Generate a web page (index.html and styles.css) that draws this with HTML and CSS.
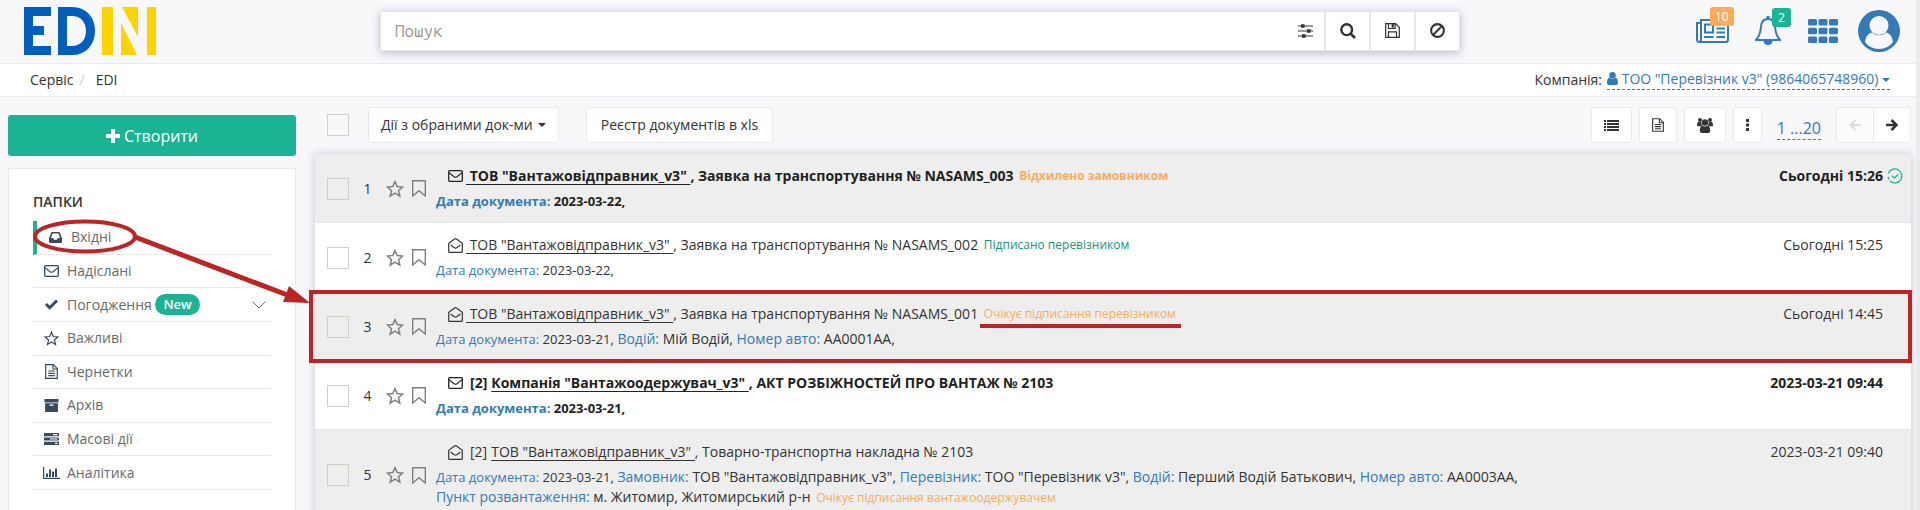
FILE: index.html
```html
<!DOCTYPE html>
<html lang="uk">
<head>
<meta charset="utf-8">
<title>EDIN</title>
<link rel="stylesheet" href="styles.css">
</head>
<body>
<svg class="sprite" aria-hidden="true">
  <symbol id="i-star" viewBox="0 0 18 18"><path d="M9 1.600l2.200 5 5.400.5-4.100 3.600 1.300 5.400L9 13.200l-4.800 2.900 1.300-5.400L1.400 7.100l5.400-.5z" fill="none" stroke="currentColor" stroke-width="1.500"/></symbol>
  <symbol id="i-bookmark" viewBox="0 0 14 17"><path d="M.7.7h12.600v15.300L7 10.600.7 16z" fill="none" stroke="currentColor" stroke-width="1.400"/></symbol>
  <symbol id="i-mail" viewBox="0 0 15 12"><rect x=".7" y=".7" width="13.600" height="10.600" rx="1" fill="none" stroke="currentColor" stroke-width="1.300"/><path d="M1 2.600l5 4.200q1.500.9 3 0l5-4.200" fill="none" stroke="currentColor" stroke-width="1.200"/></symbol>
  <symbol id="i-mail-open" viewBox="0 0 15 15"><path d="M.7 5.400Q4 2.600 6.500 1q1-.6 2 0 2.500 1.600 5.800 4.400v8q0 .9-.9.9H1.600q-.9 0-.9-.9zM2.600 7l3.600 2.800q1.300.8 2.600 0L12.400 7" fill="none" stroke="currentColor" stroke-width="1.200"/></symbol>
  <symbol id="i-file" viewBox="0 0 13 15"><path d="M.7.7h7.600l4 4v9.600H.7zM8 .7v4.300h4.300M3.200 7h6.600M3.200 9.300h6.600M3.200 11.600h6.600" fill="none" stroke="currentColor" stroke-width="1.200"/></symbol>
  <symbol id="i-user" viewBox="0 0 12 14"><circle cx="6" cy="3.500" r="3.500"/><path d="M2.600 6Q6 8.800 9.400 6 12 7 12 11.500q0 2.500-2 2.500H2q-2 0-2-2.500Q0 7 2.600 6z"/></symbol>
</svg>
<div class="app">
  <header class="top">
    <a class="logo" href="#" aria-label="EDIN">
      <svg viewBox="0 0 132 48" width="132" height="48">
        <g fill="#005fbb"><rect width="9" height="48"/><rect width="27" height="9"/><rect y="19" width="20" height="9"/><rect y="39" width="27" height="9"/></g>
        <path d="M38.500 4.500H48c11.500 0 18.500 8.500 18.500 19.500S59.500 43.500 48 43.500h-9.500z" fill="none" stroke="#005fbb" stroke-width="9"/>
        <g fill="#ffd200"><rect x="78" width="11" height="48"/><path d="M98 0h16v30zM97 16l16 32H97z"/><rect x="123" width="9" height="48"/></g>
      </svg>
    </a>
    <form class="search">
      <input type="text" placeholder="Пошук" aria-label="Пошук">
      <button type="button" class="filter" aria-label="Фільтр"><svg width="15" height="14" viewBox="0 0 15 14"><path d="M0 2h15M0 7h15M0 12h15" stroke="currentColor" stroke-width="1.200"/><path d="M3 .2h3.600v3.600H3zM9 5.200h3.600v3.600H9zM4 10.200h3.600v3.600H4z"/></svg></button>
      <button type="button" aria-label="Шукати"><svg width="16" height="16" viewBox="0 0 16 16"><circle cx="6.700" cy="6.700" r="5.400" fill="none" stroke="currentColor" stroke-width="2.400"/><path d="M10.500 10.500l4.500 4.500" stroke="currentColor" stroke-width="2.600"/></svg></button>
      <button type="button" aria-label="Зберегти"><svg width="15" height="15" viewBox="0 0 15 15"><path d="M.7.7h10l3.600 3.600v10H.7zM3.500 14.300V8.800h8v5.500M3.500.7v4.800h6.600V.7" fill="none" stroke="currentColor" stroke-width="1.200"/><path d="M6.600 1h2.200v3.600H6.600z"/></svg></button>
      <button type="button" aria-label="Скинути"><svg width="15" height="15" viewBox="0 0 15 15"><circle cx="7.500" cy="7.500" r="6.400" fill="none" stroke="currentColor" stroke-width="2.100"/><path d="M3 12l9-9" stroke="currentColor" stroke-width="2"/></svg></button>
    </form>
    <nav class="tools">
      <a class="tool" href="#" aria-label="Новини"><svg width="33" height="24" viewBox="0 0 33 24" fill="none" stroke="currentColor" stroke-width="2"><path d="M5 5V1h27v19.500q0 2.500-2.500 2.500H3.500Q1 23 1 20.500V4h4v16q0 3-2 3"/><path d="M9 5.500h8v8H9zM20.500 5.500h8.500M20.500 9.500h8.500M20.500 13.500h8.500M8 18h9.500M20.500 18h8.500"/></svg><span class="badge orange">10</span></a>
      <a class="tool bell" href="#" aria-label="Сповіщення"><svg width="26" height="29" viewBox="0 0 26 29"><path d="M13 3q6.500 0 7 7.500Q20.500 19 25 24H1q4.500-5 5-13.500Q6.500 3 13 3z" fill="none" stroke="currentColor" stroke-width="2"/><path d="M11.500 0h3v3h-3zM8.500 25h9q-.5 4-4.500 4t-4.500-4z"/></svg><span class="badge green">2</span></a>
      <a class="tool" href="#" aria-label="Додатки"><svg width="30" height="24" viewBox="0 0 30 24"><g id="apps-row"><rect width="9" height="6.500" rx="1.500"/><rect x="10.500" width="9" height="6.500" rx="1.500"/><rect x="21" width="9" height="6.500" rx="1.500"/></g><use href="#apps-row" y="8.700"/><use href="#apps-row" y="17.400"/></svg></a>
      <a class="tool" href="#" aria-label="Профіль"><svg width="42" height="42" viewBox="0 0 42 42"><circle cx="21" cy="21" r="21"/><path d="M7 32Q8 24 13.500 22.500q7.500 5.500 15 0Q34 24 35 32q-5 7-14 7T7 32z" fill="#f8f8fb"/><circle cx="21" cy="15.500" r="9.500" fill="#f8f8fb"/></svg></a>
    </nav>
  </header>

  <div class="crumbs">
    <nav><a href="#">Сервіс</a><span class="slash">/</span><a href="#">EDI</a></nav>
    <div class="company"><span>Компанія:</span><a href="#"><svg width="11" height="13"><use href="#i-user"/></svg> ТОО "Перевізник v3" (9864065748960) <i class="caret"></i></a></div>
  </div>

  <div class="body">
    <aside class="side">
      <button type="button" class="create"><svg width="14" height="14" viewBox="0 0 14 14"><path d="M5 0h4v5h5v4H9v5H5V9H0V5h5z"/></svg>Створити</button>
      <section class="folders">
        <h2>ПАПКИ</h2>
        <ul>
          <li class="active"><a href="#"><svg width="13" height="11" viewBox="0 0 13 11"><path fill-rule="evenodd" d="M2.500 0h8L13 6v4q0 1-1 1H1q-1 0-1-1V6zM3.600 1.600L1.900 6h2.300l.8 1.700h3L8.800 6h2.300L9.400 1.600z"/></svg>Вхідні</a></li>
          <li><a href="#"><svg width="15" height="12"><use href="#i-mail"/></svg>Надіслані</a></li>
          <li><a href="#"><svg width="14" height="11" viewBox="0 0 14 11"><path d="M1.500 5l3.700 3.700L12.500 1.500" fill="none" stroke="currentColor" stroke-width="3"/></svg>Погодження <span class="new">New</span></a><svg class="chev" width="14" height="8" viewBox="0 0 14 8"><path d="M.5.5L7 7 13.500.5" fill="none" stroke="currentColor"/></svg></li>
          <li><a href="#"><svg width="15" height="15"><use href="#i-star"/></svg>Важливі</a></li>
          <li><a href="#"><svg width="13" height="15"><use href="#i-file"/></svg>Чернетки</a></li>
          <li><a href="#"><svg width="14" height="13" viewBox="0 0 14 13"><path d="M0 0h14v3.500H0z"/><path fill-rule="evenodd" d="M.6 4.300h12.800V13H.6zM5 5.500v1.300h4V5.500z"/></svg>Архів</a></li>
          <li><a href="#"><svg width="15" height="12" viewBox="0 0 15 12"><path fill-rule="evenodd" d="M0 0h15v3.200H0zM9 1v1.200h4.500V1zM0 4.400h15v3.200H0zM6 5.400v1.200h7.500V5.400zM0 8.800h15V12H0zM11 9.800V11h2.500V9.800z"/></svg>Масові дії</a></li>
          <li><a href="#"><svg width="17" height="12" viewBox="0 0 17 12"><path d="M0 0h1.200v10.800H17V12H0zM3 6.500h2V10H3zM6 2.500h2V10H6zM9 4.500h2V10H9zM12 1.500h2V10h-2z"/></svg>Аналітика</a></li>
        </ul>
      </section>
    </aside>

    <main class="main">
      <div class="bar">
        <input type="checkbox" class="check" aria-label="Обрати всі">
        <button type="button" class="btn actions">Дії з обраними док-ми <i class="caret"></i></button>
        <button type="button" class="btn export">Реєстр документів в xls</button>
        <div class="bar-right">
          <button type="button" class="btn" aria-label="Список"><svg width="15" height="11" viewBox="0 0 15 11"><path d="M0 0h2v2H0zM3 0h12v2H3zM0 3h2v2H0zM3 3h12v2H3zM0 6h2v2H0zM3 6h12v2H3zM0 9h2v2H0zM3 9h12v2H3z"/></svg></button>
          <button type="button" class="btn" aria-label="Документ"><svg width="12" height="14"><use href="#i-file"/></svg></button>
          <button type="button" class="btn" aria-label="Групи"><svg width="16" height="15" viewBox="0 0 16 15"><circle cx="3" cy="2" r="2"/><circle cx="13" cy="2" r="2"/><circle cx="8" cy="4.500" r="3.200"/><path d="M0 7.500Q0 4 1.500 4h2.700q0 2 1 3.500l-2 .8H1Q0 8.300 0 7.500zM16 7.500Q16 4 14.500 4h-2.700q0 2-1 3.500l2 .8H15q1 0 1-.8zM5.300 7.500q2.700 1.800 5.400 0 2.500.8 2.500 5 0 2.500-2 2.500H4.800q-2 0-2-2.500 0-4.200 2.500-5z"/></svg></button>
          <button type="button" class="btn" aria-label="Більше"><svg width="3" height="12" viewBox="0 0 3 12"><path d="M0 0h3v3H0zM0 4.500h3v3H0zM0 9h3v3H0z"/></svg></button>
          <a class="pages" href="#">1 ...20</a>
          <div class="pager">
            <button type="button" class="btn" disabled aria-label="Назад"><svg width="12" height="12" viewBox="0 0 12 12"><path d="M12 6H2M6.500 1L1.500 6l5 5" fill="none" stroke="currentColor" stroke-width="2.200"/></svg></button>
            <button type="button" class="btn" aria-label="Вперед"><svg width="12" height="12" viewBox="0 0 12 12"><path d="M0 6h10M5.500 1l5 5-5 5" fill="none" stroke="currentColor" stroke-width="2.600"/></svg></button>
          </div>
        </div>
      </div>

      <ul class="docs">
        <li class="row unread grey">
          <input type="checkbox" class="check" aria-label="Обрати 1"><span class="num">1</span>
          <svg class="mark" width="18" height="18"><use href="#i-star"/></svg><svg class="mark" width="14" height="17"><use href="#i-bookmark"/></svg>
          <div class="info">
            <p class="title"><svg width="15" height="12"><use href="#i-mail"/></svg><a href="#">&nbsp;ТОВ "Вантажовідправник_v3"&nbsp;</a>, Заявка на транспортування № NASAMS_003 <span class="status wait">Відхилено замовником</span></p>
            <p class="meta"><small><b>Дата документа:</b> 2023-03-22,</small></p>
          </div>
          <time>Сьогодні 15:26</time>
          <svg class="done" width="16" height="16" viewBox="0 0 16 16" fill="none" stroke="currentColor" stroke-width="1.300"><path d="M1.300 5.500A7 7 0 1 1 3 13M1 9l1 2.500M5 7.800l2.300 2.300 4-4"/></svg>
        </li>
        <li class="row">
          <input type="checkbox" class="check" aria-label="Обрати 2"><span class="num">2</span>
          <svg class="mark" width="18" height="18"><use href="#i-star"/></svg><svg class="mark" width="14" height="17"><use href="#i-bookmark"/></svg>
          <div class="info">
            <p class="title"><svg width="15" height="15"><use href="#i-mail-open"/></svg><a href="#">&nbsp;ТОВ "Вантажовідправник_v3"&nbsp;</a>, Заявка на транспортування № NASAMS_002 <span class="status ok">Підписано перевізником</span></p>
            <p class="meta"><small><b>Дата документа:</b> 2023-03-22,</small></p>
          </div>
          <time>Сьогодні 15:25</time>
        </li>
        <li class="row grey framed">
          <input type="checkbox" class="check" aria-label="Обрати 3"><span class="num">3</span>
          <svg class="mark" width="18" height="18"><use href="#i-star"/></svg><svg class="mark" width="14" height="17"><use href="#i-bookmark"/></svg>
          <div class="info">
            <p class="title"><svg width="15" height="15"><use href="#i-mail-open"/></svg><a href="#">&nbsp;ТОВ "Вантажовідправник_v3"&nbsp;</a>, Заявка на транспортування № NASAMS_001 <span class="status wait underlined">Очікує підписання перевізником</span></p>
            <p class="meta"><small><b>Дата документа:</b> 2023-03-21,</small> <b>Водій:</b> Мій Водій, <b>Номер авто:</b> АА0001АА,</p>
          </div>
          <time>Сьогодні 14:45</time>
        </li>
        <li class="row unread">
          <input type="checkbox" class="check" aria-label="Обрати 4"><span class="num">4</span>
          <svg class="mark" width="18" height="18"><use href="#i-star"/></svg><svg class="mark" width="14" height="17"><use href="#i-bookmark"/></svg>
          <div class="info">
            <p class="title"><svg width="15" height="12"><use href="#i-mail"/></svg><span class="count">[2]</span><a href="#">Компанія "Вантажоодержувач_v3"&nbsp;</a>, АКТ РОЗБІЖНОСТЕЙ ПРО ВАНТАЖ № 2103</p>
            <p class="meta"><small><b>Дата документа:</b> 2023-03-21,</small></p>
          </div>
          <time>2023-03-21 09:44</time>
        </li>
        <li class="row grey">
          <input type="checkbox" class="check" aria-label="Обрати 5"><span class="num">5</span>
          <svg class="mark" width="18" height="18"><use href="#i-star"/></svg><svg class="mark" width="14" height="17"><use href="#i-bookmark"/></svg>
          <div class="info">
            <p class="title"><svg width="15" height="15"><use href="#i-mail-open"/></svg><span class="count">[2]</span><a href="#">ТОВ "Вантажовідправник_v3"&nbsp;</a>, Товарно-транспортна накладна № 2103</p>
            <p class="meta"><small><b>Дата документа:</b> 2023-03-21,</small> <b>Замовник:</b> ТОВ "Вантажовідправник_v3", <b>Перевізник:</b> ТОО "Перевізник v3", <b>Водій:</b> Перший Водій Батькович, <b>Номер авто:</b> АА0003АА,<br><b>Пункт розвантаження:</b> м. Житомир, Житомирський р-н <span class="status wait">Очікує підписання вантажоодержувачем</span></p>
          </div>
          <time>2023-03-21 09:40</time>
        </li>
      </ul>
    </main>
  </div>

  <svg class="pointer" width="320" height="320" viewBox="0 0 320 320" aria-hidden="true">
    <ellipse cx="85" cy="236.500" rx="50" ry="15" fill="none" stroke="#bb2525" stroke-width="4"/>
    <path d="M135 237L290 296" stroke="#bb2525" stroke-width="5"/>
    <path d="M289 286l21 17-27-1z" fill="#bb2525"/>
  </svg>
</div>
</body>
</html>
```
FILE: styles.css
```css
* { box-sizing: border-box; }
html, body { margin: 0; height: 100%; overflow: hidden; }
body { font: 14px/20px "Open Sans", "Noto Sans", sans-serif; color: #333; background: #f8f8fb; }
ul { list-style: none; margin: 0; padding: 0; }
p, h2 { margin: 0; }
a { color: inherit; text-decoration: none; }
button, input { font: inherit; color: inherit; margin: 0; }
svg { flex: none; }
svg:not([fill]) { fill: currentColor; }
.sprite { position: absolute; width: 0; height: 0; }
.app { position: relative; height: 100%; overflow: hidden; border-right: 4px solid #ebebef; }

.top { display: flex; align-items: center; justify-content: space-between; height: 64px; padding: 0 16px 2px 24px; border-bottom: 1px solid #e7eaec; }
.logo { display: block; height: 48px; flex: 0 0 356px; }
.search { display: flex; flex: 0 1 1080px; height: 40px; background: #fff; border: 1px solid #e5e6e7; box-shadow: 0 2px 9px #b9bccb; }
.search input { flex: 1; min-width: 0; border: 0; padding: 0 14px; background: none; font: 17px/24px "Ubuntu Mono", "DejaVu Sans Mono", monospace; outline: 0; }
.search input::placeholder { color: #999; opacity: 1; }
.search button { display: grid; place-items: center; width: 45px; padding: 0; border: 0; border-left: 2px solid #e5e6e7; background: none; }
.search .filter { width: 38px; border: 0; }
.tools { display: flex; align-items: center; flex: 1; justify-content: flex-end; color: #337ab7; }
.tool { position: relative; display: flex; margin-left: 20px; }
.tool.bell { margin-left: 26px; margin-right: 7px; }
.badge { position: absolute; left: 14px; top: -12px; padding: 0 5px; border-radius: 3px; font-size: 12px; line-height: 19px; color: #fff; }
.bell .badge { left: 17px; top: -8px; padding: 0 6px; }
.orange { background: #f8ac59; }
.green, .new, .create { background: #1ab394; }

.crumbs { display: flex; justify-content: space-between; align-items: center; height: 33px; padding: 0 26px 0 30px; background: #fff; border-bottom: 1px solid #e7eaec; }
.slash { color: #ccc; padding: 0 11px 0 6px; }
.company { display: flex; gap: 5px; }
.company a, .pages { color: #337ab7; border-bottom: 1px dashed #337ab7; }
.company a { line-height: 18px; }
.company svg { vertical-align: -1px; }
.caret { display: inline-block; border: 4px solid transparent; border-top-color: currentColor; border-bottom: 0; vertical-align: middle; }

.body { display: flex; align-items: flex-start; gap: 19px; padding: 0 5px 0 8px; }
.side { flex: 0 0 288px; padding-top: 18px; }
.create { display: flex; align-items: center; justify-content: center; gap: 4px; width: 100%; height: 41px; border: 0; border-radius: 3px; color: #fff; font-size: 16px; }
.folders { margin-top: 12px; padding: 23px 24px 40px; background: #fff; border: 1px solid #e7eaec; }
.folders h2 { font-size: 14px; font-weight: 600; line-height: 20px; padding-bottom: 9px; }
.folders ul { display: grid; grid-auto-rows: 1fr; height: 269px; }
.folders li { display: flex; align-items: center; justify-content: space-between; border-bottom: 1px solid #e7eaec; padding: 0 5px 0 10px; color: #676a6c; }
.folders .active { border-left: 4px solid #1ab394; }
.folders a { display: flex; align-items: center; white-space: pre; }
.folders a svg { width: 17px; margin-right: 7px; color: #3a4a5b; }
.new { padding: 0 8px; border-radius: 11px; color: #fff; font-size: 13px; font-weight: 600; line-height: 21px; }

.main { flex: 1; min-width: 0; }
.bar { display: flex; align-items: center; height: 57px; padding: 0 0 1px 12px; }
.check { appearance: none; width: 22px; height: 22px; border: 1px solid #d2cec8; background: transparent; }
.bar > .check { margin-right: 19px; }
.btn { height: 36px; padding: 0 12px; border: 1px solid #e7eaec; border-radius: 3px; background: #fff; display: inline-flex; align-items: center; gap: 5px; white-space: nowrap; }
.actions { margin-right: 27px; }
.export { padding: 0 14px; }
.bar-right { display: flex; align-items: center; gap: 7px; margin-left: auto; }
.pages { margin: 6px 8px 0; font-size: 16px; line-height: 22px; }
.pager { display: flex; }
.pager .btn:first-child { border-radius: 3px 0 0 3px; border-right: 0; }
.pager .btn:last-child { border-radius: 0 3px 3px 0; }
.btn:disabled { color: #ddd; background: #fcfcfd; }

.docs { box-shadow: 0 0 9px #c4c6d4; }
.row { position: relative; display: grid; grid-template-columns: 22px 37px 18px 14px 1fr auto 28px; align-items: center; padding: 12px 0 11px 12px; border-bottom: 1px solid #e7eaec; background: #fff; }
.grey { background: #eee; }
.num { text-align: center; }
.mark { color: #808080; }
.mark + .mark { margin-left: 8px; }
.info { padding-left: 18px; }
.title { display: flex; align-items: center; white-space: pre; padding-left: 12px; height: 20px; margin-bottom: 5px; }
.title svg { margin-right: 3px; }
.title a { text-decoration: underline; text-underline-offset: 3px; }
.count { margin: 0 4px; }
.meta b { font-weight: inherit; color: #337ab7; }
.meta small { font-size: 13px; }
.status { font-size: 12px; margin-left: 2px; }
.wait { color: #f8ac59; }
.ok { color: #1c8f7b; }
.unread .info, .unread time { font-weight: 700; color: #222; }
.row time { align-self: start; }
.done { align-self: start; margin: 2px 0 0 4px; color: #1ab394; }
.framed { z-index: 1; }
.framed::after { content: ""; position: absolute; inset: -2px -1px -3px -6px; border: 4px solid #bb2525; }
.underlined { position: relative; }
.underlined::after { content: ""; position: absolute; left: -4px; right: -5px; bottom: -4px; height: 4px; background: #bb2525; }
.pointer { position: absolute; left: 0; top: 0; pointer-events: none; }
```
